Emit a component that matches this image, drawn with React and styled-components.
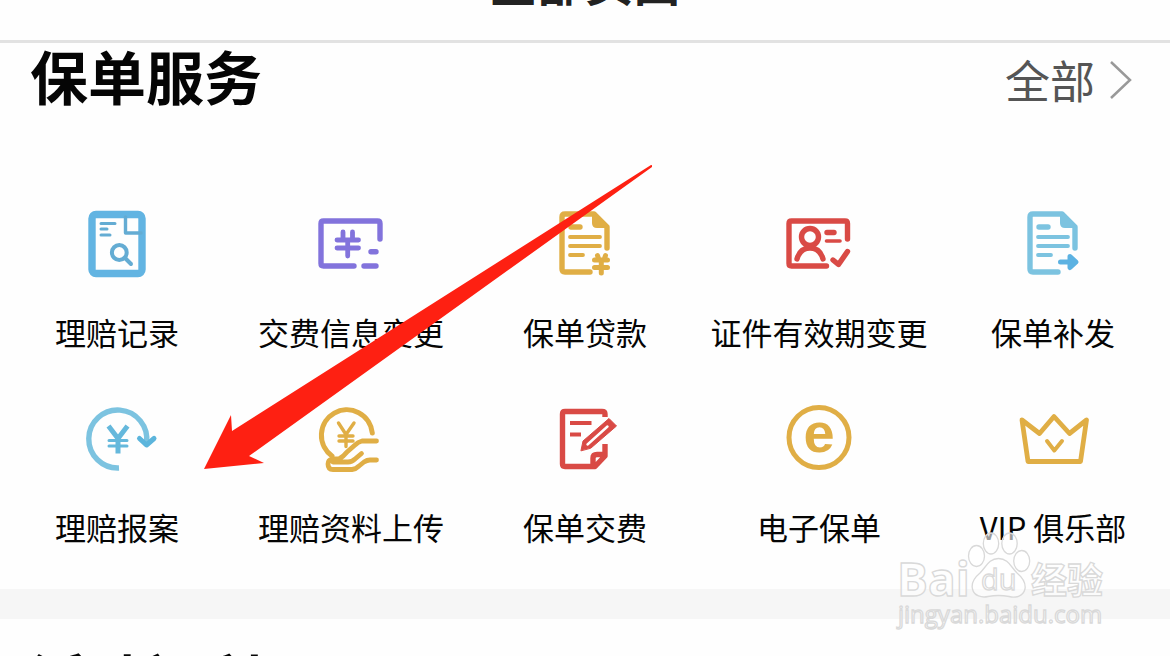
import styled, { createGlobalStyle } from "styled-components";

const blue = "#62b4e2";
const skyBlue = "#7cc3e0";
const gold = "#e0ae45";
const red = "#d94a45";
const purple = "#8273dc";

function DocumentShape({ fill }) {
  return (
    <>
      <path d="M58 40V19L45 6H16Q13 6 13 9V61Q13 64 16 64H41" />
      <path d="M43 4V15Q43 20 48 20H60L45 4Z" fill={fill} stroke="none" />
      <path d="M22 19H31" />
      <path d="M21 29H51M21 38H51M21 47H34" strokeWidth="3.8" />
    </>
  );
}

function ClaimRecordIcon() {
  return (
    <Icon $color={blue} viewBox="0 0 72 72">
      <rect x="11" y="6.5" width="50" height="59" rx="4" strokeWidth="7.4" />
      <g stroke="#64acd3" strokeWidth="3.4">
        <path d="M44.5 9V25H60" />
        <path d="M20 15.5H34M20 21H26M20 27H29" strokeWidth="3" />
        <circle cx="38.3" cy="44.5" r="7.4" strokeWidth="4" />
        <path d="M44 50L50 56" strokeWidth="4" />
      </g>
    </Icon>
  );
}

function PaymentInfoIcon() {
  return (
    <Icon $color={purple} viewBox="0 0 72 72">
      <path d="M65 31V15.5Q65 13 62.5 13H8.5Q6 13 6 15.5V55.5Q6 58 8.5 58H39M49 58H61M56 43.7H61" />
      <path
        d="M22 32H43.5M22 40H43.5M28 24V32M37.5 24V32M32.7 32V48"
        strokeWidth="4.8"
      />
    </Icon>
  );
}

function LoanIcon() {
  return (
    <Icon $color={gold} viewBox="0 0 72 72">
      <DocumentShape fill={gold} />
      <path
        d="M45.5 52H58.5M45.5 59.5H58.5M48.5 47.5L50 52M56.5 47.5L55 52M52.3 52V65"
        strokeWidth="5"
      />
    </Icon>
  );
}

function CertificateIcon() {
  return (
    <Icon $color={red} viewBox="0 0 72 72">
      <path d="M64.5 31V15.5Q64.5 13 62 13H8.5Q6 13 6 15.5V55.5Q6 58 8.5 58H43.5" />
      <circle cx="27" cy="29" r="8.5" />
      <path d="M14 51C16 44 20 40 27 40S38 44 40 51" />
      <path d="M44 24.5H51" />
      <path d="M43.5 33H57" strokeWidth="3.6" />
      <path d="M50 52L55.5 56.5L64.5 43.5" />
    </Icon>
  );
}

function ReissueIcon() {
  return (
    <Icon $color={skyBlue} viewBox="0 0 72 72">
      <DocumentShape fill={skyBlue} />
      <path
        d="M43.5 54H57M53 48.5L59 54L53 59.5Z"
        stroke="#5cb2e2"
        strokeWidth="5"
      />
    </Icon>
  );
}

function ClaimReportIcon() {
  return (
    <Icon $color={skyBlue} viewBox="0 0 72 72">
      <path d="M38 65A29 29 0 1 1 65.5 40" strokeLinecap="butt" />
      <path
        d="M58.5 35.5L65.5 42L73 35.5"
        stroke="#5cb5dc"
        strokeWidth="5"
      />
      <path
        d="M27.5 23L37 35.5L46.5 23M37 35V50.5"
        stroke="#65b8dc"
        strokeWidth="5"
        strokeLinecap="butt"
      />
      <path d="M28 37.5H46M28 43H46" stroke="#65b8dc" strokeWidth="3" />
    </Icon>
  );
}

function ClaimUploadIcon() {
  return (
    <Icon $color={gold} viewBox="0 0 72 72">
      <path d="M57.3 30A25.5 25.5 0 1 0 17 53" strokeWidth="5" />
      <path
        d="M23.5 20L31 31.5L39 20M31 31V43.5M24 33H38M24 38H38"
        strokeWidth="3.4"
      />
      <path
        d="M61.5 38H47Q43 39 40 42L32 49Q28 54 24 56H17Q13 57 13 61Q13 66.5 18 66.5H37Q41 66 44 63L49 59Q52 57 55 57H61.5M18 59H33Q37 59 40 56L46.5 50.5"
        strokeWidth="4.8"
      />
    </Icon>
  );
}

function PolicyPaymentIcon() {
  return (
    <Icon $color={red} viewBox="0 0 72 72">
      <path
        d="M56 14V11Q56 8.5 53 8.5H16Q13.5 8.5 13.5 11V61Q13.5 63.5 16 63.5H46L56 53V41M44 62V55Q44 51.5 48 51.5H56"
        strokeLinecap="butt"
      />
      <path d="M21 20H42.5M21 31.5H32" strokeWidth="4" strokeLinecap="butt" />
      <path
        d="M32 47.5L34 38L60 15.5L67.5 23L42 45Z"
        fill={red}
        strokeWidth="1"
      />
      <path d="M38.5 41.5L58.5 23.5" stroke="#fff" strokeWidth="2.4" />
    </Icon>
  );
}

function EPolicyIcon() {
  return (
    <Icon $color={gold} viewBox="0 0 72 72">
      <circle cx="36" cy="34.5" r="30" strokeWidth="5" />
      <IconLetter x="36" y="49">
        e
      </IconLetter>
    </Icon>
  );
}

function ClubIcon() {
  return (
    <Icon $color={gold} viewBox="0 0 72 72">
      <path
        d="M5 17L22.5 30.5L37 13.5L52.5 30.5L69.5 17L63.5 58.5H11Z"
        strokeWidth="4.8"
      />
      <path d="M30 38L37.3 47.5L45 38" strokeWidth="4" />
    </Icon>
  );
}

const services = [
  { name: "理赔记录", icon: ClaimRecordIcon },
  { name: "交费信息变更", icon: PaymentInfoIcon },
  { name: "保单贷款", icon: LoanIcon },
  { name: "证件有效期变更", icon: CertificateIcon },
  { name: "保单补发", icon: ReissueIcon },
  { name: "理赔报案", icon: ClaimReportIcon },
  { name: "理赔资料上传", icon: ClaimUploadIcon },
  { name: "保单交费", icon: PolicyPaymentIcon },
  { name: "电子保单", icon: EPolicyIcon },
  { name: "VIP 俱乐部", icon: ClubIcon },
];

function Watermark() {
  return (
    <WatermarkSvg viewBox="0 0 214 100" aria-hidden="true">
      <WatermarkText x="1" y="61" $size={46} $weight={700}>
        Bai
      </WatermarkText>
      <ellipse cx="80.5" cy="21" rx="8" ry="10.5" />
      <ellipse cx="95" cy="8.5" rx="7.7" ry="10.5" />
      <ellipse cx="113.5" cy="8.5" rx="7.7" ry="10.5" />
      <ellipse cx="125.7" cy="26" rx="8" ry="10.5" />
      <path d="M102.5 23.5C112 23.5 115 32 121 38C127 43 130 48 129 54C127 62 119 63 113 61.5Q102.5 59.5 92 61.5C86 63 78 61 76.5 54C75 48 78 43 84 38C90 32 93 23.5 102.5 23.5Z" />
      <WatermarkText x="85" y="55" $size={29} $weight={400}>
        du
      </WatermarkText>
      <WatermarkText x="135" y="59" $size={36} $weight={700}>
        经验
      </WatermarkText>
      <WatermarkText x="2" y="88" $size={24} $weight={400}>
        jingyan.baidu.com
      </WatermarkText>
    </WatermarkSvg>
  );
}

export default function App() {
  return (
    <>
      <GlobalStyle />
      <Page>
        <Header>
          <h1>全部页面</h1>
        </Header>
        <Section>
          <SectionHeader>
            <h2>保单服务</h2>
            <AllLink href="#all">
              全部
              <svg viewBox="0 0 24 40">
                <path d="M2 2L21 20L2 38" />
              </svg>
            </AllLink>
          </SectionHeader>
          <ServiceGrid>
            {services.map(({ name, icon: ServiceIcon }) => (
              <ServiceLink href="#service" key={name}>
                <ServiceIcon />
                <span>{name}</span>
              </ServiceLink>
            ))}
          </ServiceGrid>
        </Section>
        <Divider />
        <NextSection>
          <SectionHeader>
            <h2>活动福利</h2>
          </SectionHeader>
        </NextSection>
        <Pointer viewBox="0 0 448 304" aria-hidden="true">
          <path d="M0 304L27 250L28 266L447 0Q449 0 448 2L45 291L60 298Z" />
        </Pointer>
        <Watermark />
      </Page>
    </>
  );
}

const GlobalStyle = createGlobalStyle`
  * {
    box-sizing: border-box;
  }
  body {
    margin: 0;
    background-color: #fefefe;
    color: #050505;
    font-family: "Noto Sans CJK SC", sans-serif;
  }
  h1, h2 {
    margin: 0;
  }
  a {
    color: inherit;
    text-decoration: none;
  }
`;

const Page = styled.div`
  position: relative;
  width: 100%;
  height: 100vh;
  overflow: hidden;
`;

const Header = styled.header`
  display: flex;
  justify-content: center;
  align-items: flex-end;
  height: 43px;
  padding-bottom: 36px;
  border-bottom: 3px solid #e2e2e2;
  overflow: hidden;
  h1 {
    color: #222;
    font-size: 48px;
    line-height: 48px;
  }
`;

const Section = styled.section`
  padding: 3px 0 46px;
`;

const NextSection = styled(Section)`
  padding-top: 30px;
`;

const SectionHeader = styled.div`
  display: flex;
  justify-content: space-between;
  align-items: flex-start;
  padding: 0 37px 0 30px;
  h2 {
    font-size: 58px;
    line-height: 58px;
    font-weight: 700;
  }
`;

const AllLink = styled.a`
  display: flex;
  align-items: center;
  gap: 14px;
  color: #555;
  font-size: 45px;
  line-height: 68px;
  svg {
    width: 24px;
    height: 40px;
    fill: none;
    stroke: #999;
    stroke-width: 2.5;
  }
`;

const ServiceGrid = styled.nav`
  display: grid;
  grid-template-columns: repeat(5, 1fr);
  row-gap: 55px;
  margin-top: 94px;
`;

const ServiceLink = styled.a`
  display: flex;
  flex-direction: column;
  align-items: center;
  gap: 36px;
  font-size: 31px;
  line-height: 32px;
  white-space: nowrap;
`;

const Icon = styled.svg`
  width: 72px;
  height: 72px;
  overflow: visible;
  fill: none;
  stroke: ${({ $color }) => $color};
  stroke-width: 5.4;
  stroke-linecap: round;
  stroke-linejoin: round;
`;

const IconLetter = styled.text`
  fill: ${gold};
  stroke: none;
  font-family: "Liberation Sans", sans-serif;
  font-size: 56px;
  font-weight: 700;
  text-anchor: middle;
`;

const Divider = styled.div`
  height: 30px;
  background-color: #f6f6f6;
`;

const Pointer = styled.svg`
  position: absolute;
  left: 204px;
  top: 165px;
  width: 448px;
  height: 304px;
  fill: #fe2012;
  pointer-events: none;
`;

const WatermarkSvg = styled.svg`
  position: absolute;
  right: 60px;
  bottom: 21px;
  width: 214px;
  height: 100px;
  overflow: visible;
  fill: rgba(255, 255, 255, 0.6);
  stroke: #d9d9d9;
  stroke-width: 1.3;
  pointer-events: none;
`;

const WatermarkText = styled.text`
  font-family: "Open Sans", "Noto Sans CJK SC", sans-serif;
  font-size: ${({ $size }) => $size}px;
  font-weight: ${({ $weight }) => $weight};
`;
